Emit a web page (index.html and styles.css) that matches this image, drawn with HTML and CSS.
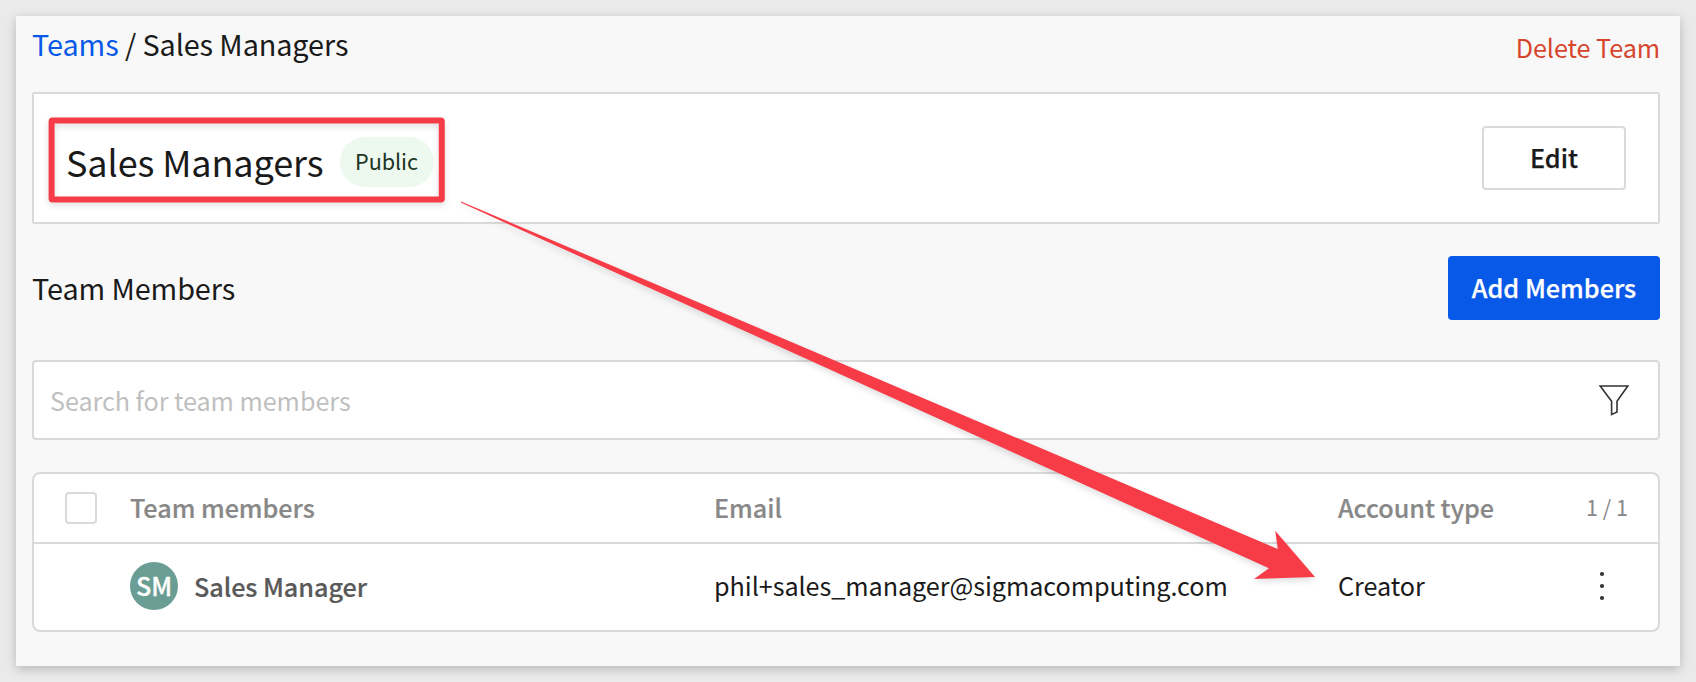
FILE: index.html
```html
<!DOCTYPE html>
<html lang="en">
<head>
<meta charset="utf-8">
<title>Sales Managers</title>
<link rel="stylesheet" href="styles.css">
</head>
<body>
<main class="page">
  <header class="topbar">
    <nav class="breadcrumb"><a class="breadcrumb-link" href="#">Teams</a> / Sales Managers</nav>
    <a class="delete" href="#">Delete Team</a>
  </header>

  <section class="team">
    <h1 class="team-name">Sales Managers</h1>
    <span class="badge">Public</span>
    <button class="btn btn-edit" type="button">Edit</button>
  </section>

  <section class="members-head">
    <h2 class="members-title">Team Members</h2>
    <button class="btn btn-primary" type="button">Add Members</button>
  </section>

  <div class="search">
    <span class="search-hint">Search for team members</span>
    <svg class="filter" width="32" height="34" viewBox="0 0 32 34" aria-hidden="true">
      <path d="M2.2 3H29.8L19 18.2V29L13.6 31.6V18.2Z"/>
    </svg>
  </div>

  <div class="table">
    <div class="row row-head">
      <span class="checkbox"></span>
      <span>Team members</span>
      <span>Email</span>
      <span>Account type</span>
      <span class="count">1 / 1</span>
    </div>
    <div class="row row-body">
      <span></span>
      <span class="member"><span class="avatar">SM</span><span class="member-name">Sales Manager</span></span>
      <span class="cell">phil+sales_manager@sigmacomputing.com</span>
      <span class="cell">Creator</span>
      <svg class="more" width="8" height="32" viewBox="0 0 8 32" aria-hidden="true">
        <circle cx="4" cy="4" r="2.1"/><circle cx="4" cy="16" r="2.1"/><circle cx="4" cy="28" r="2.1"/>
      </svg>
    </div>
  </div>
</main>

<svg class="annotation" width="1696" height="682" viewBox="0 0 1696 682" aria-hidden="true">
  <rect class="annotation-box" x="51.6" y="120.4" width="390.2" height="79" rx="1"/>
  <path class="annotation-arrow" d="M461 201.4L1277.8 549L1275.2 530.8L1315 577L1254 579L1269 568.3L460.8 202.6Z"/>
</svg>
</body>
</html>
```
FILE: styles.css
```css
* {
  box-sizing: border-box;
}

body {
  margin: 0;
  height: 682px;
  padding: 16px;
  overflow: hidden;
  background: #eaeaea;
  color: #1a1a1a;
  font-family: "Noto Sans CJK SC", "Noto Sans", sans-serif;
  font-size: 25.2px;
  line-height: 40px;
  letter-spacing: -0.05px;
  white-space: nowrap;
}

a {
  text-decoration: none;
}

h1,
h2 {
  margin: 0;
  font-weight: 400;
}

.page {
  height: 650px;
  padding: 0 20px 34px 16px;
  background: #f8f8f8;
  box-shadow: 0 3px 10px rgba(0, 0, 0, 0.22);
}

.topbar {
  display: flex;
  justify-content: space-between;
  height: 76px;
}

.breadcrumb {
  padding-top: 8px;
  font-size: 28.8px;
  letter-spacing: -0.09px;
}

.breadcrumb-link {
  color: #0859e8;
}

.delete {
  padding-top: 11px;
  color: #d7452e;
  letter-spacing: -0.07px;
}

.team {
  display: flex;
  align-items: center;
  height: 132px;
  padding: 0 32px;
  border: 2px solid #dadada;
  border-radius: 2px;
  background: #fff;
}

.team-name {
  padding-top: 5px;
  font-size: 36px;
  letter-spacing: -0.1px;
}

.badge {
  height: 50px;
  width: 94px;
  margin: 8px 0 0 16px;
  border-radius: 25px;
  background: #edf8ee;
  color: #1e3424;
  font-size: 21.6px;
  line-height: 48px;
  text-align: center;
}

.btn {
  height: 64px;
  padding: 0 0 2px;
  border-radius: 4px;
  font: inherit;
  font-weight: 500;
  letter-spacing: 0;
  -webkit-text-stroke: 0.25px currentColor;
}

.btn-edit {
  width: 144px;
  margin-left: auto;
  border: 2px solid #dadada;
  background: #fff;
  color: #1a1a1a;
}

.btn-primary {
  width: 212px;
  border: 0;
  background: #0859e8;
  color: #fff;
}

.members-head {
  display: flex;
  justify-content: space-between;
  align-items: center;
  height: 136px;
  padding-bottom: 8px;
}

.members-title {
  font-size: 28.8px;
  letter-spacing: -0.1px;
}

.search {
  display: flex;
  justify-content: space-between;
  align-items: center;
  height: 80px;
  padding: 0 28px 0 16px;
  border: 2px solid #dadada;
  border-radius: 4px;
  background: #fff;
}

.search-hint {
  padding-bottom: 1px;
  color: #bfbfbf;
  letter-spacing: -0.06px;
}

.filter {
  fill: none;
  stroke: #333;
  stroke-width: 1.6;
}

.table {
  height: 160px;
  margin-top: 32px;
  border: 2px solid #dadada;
  border-radius: 8px;
  background: #fff;
}

.row {
  display: grid;
  grid-template-columns: 65px 584px 624px 248px 1fr;
  align-items: center;
  padding-left: 31px;
}

.row-head {
  height: 70px;
  border-bottom: 2px solid #dadada;
  color: #888;
  font-weight: 500;
  line-height: 38px;
  -webkit-text-stroke: 0.2px currentColor;
}

.row-head > span:not(.checkbox) {
  padding-bottom: 2px;
}

.row-body {
  height: 86px;
  padding-bottom: 2px;
}

.cell {
  padding-bottom: 2px;
  letter-spacing: -0.06px;
}

.checkbox {
  width: 32px;
  height: 32px;
  border: 2px solid #dadada;
  border-radius: 4px;
}

.row-head .count {
  font-size: 21.6px;
  font-weight: 400;
  -webkit-text-stroke: 0;
}

.member {
  display: flex;
  align-items: center;
  gap: 16px;
}

.avatar {
  width: 48px;
  height: 48px;
  border-radius: 50%;
  background: #6a9d93;
  color: #fff;
  font-weight: 500;
  line-height: 46px;
  text-align: center;
  -webkit-text-stroke: 0.3px currentColor;
}

.member-name {
  color: #595959;
  font-weight: 500;
  -webkit-text-stroke: 0.2px currentColor;
}

.more {
  margin-left: 12px;
  fill: #333;
}

.annotation {
  position: absolute;
  top: 0;
  left: 0;
  pointer-events: none;
  filter: drop-shadow(0 3px 3px rgba(0, 0, 0, 0.13));
}

.annotation-box {
  fill: none;
  stroke: #f73c48;
  stroke-width: 6;
  stroke-linejoin: round;
}

.annotation-arrow {
  fill: #f73c48;
}
```
